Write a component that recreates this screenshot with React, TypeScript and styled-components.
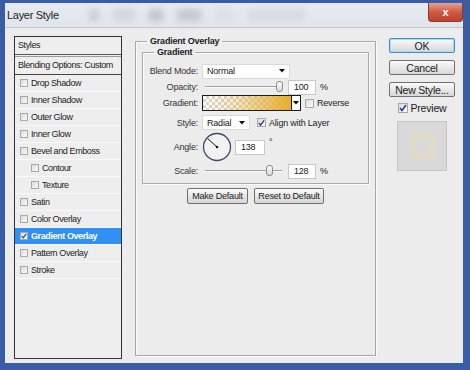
import styled, { createGlobalStyle } from 'styled-components'

const GlobalStyle = createGlobalStyle`
  html, body {
    margin: 0;
    padding: 0;
    background: #3a5ba6;
  }
  body {
    font-family: 'Liberation Sans', Arial, sans-serif;
  }
`

const Frame = styled.div`
  width: 470px;
  height: 370px;
  box-sizing: border-box;
  background: #3a5ba6;
  padding: 3px 7px 7px 5px;
`
const Window = styled.div`
  height: 100%;
  background: #ececec;
  display: flex;
  flex-direction: column;
`
const TitleBar = styled.div`
  height: 24px;
  display: flex;
  align-items: center;
  padding-left: 2px;
  background: linear-gradient(#e6eaf1, #e0e5ec);
  border-bottom: 1px solid #c2c6cd;
  overflow: hidden;
`
const Title = styled.span`
  font-size: 11px;
  letter-spacing: -0.3px;
  color: #222;
  margin-right: 30px;
`
type BlobProps = {
  w: number
  tone: string
}
const Blob = styled.span<BlobProps>`
  width: ${(p) => p.w}px;
  height: 12px;
  margin-right: 14px;
  background: ${(p) => p.tone};
  filter: blur(3px);
  opacity: 0.6;
`
const CloseButton = styled.div`
  margin-left: auto;
  align-self: flex-start;
  width: 35px;
  height: 19px;
  box-sizing: border-box;
  border: 1px solid #8a3a30;
  border-top: none;
  border-radius: 0 0 4px 4px;
  background: linear-gradient(#e7a393, #d05a45 50%, #c0402c);
  color: #fff;
  font-weight: bold;
  font-size: 11px;
  display: flex;
  align-items: center;
  justify-content: center;
`
const Body = styled.div`
  flex: 1;
  display: flex;
  padding: 8px 8px 4px 9px;
  min-height: 0;
`
const LeftPanel = styled.div`
  width: 108px;
  box-sizing: border-box;
  border: 1px solid #333;
  background: #eeeeee;
  font-size: 9px;
  letter-spacing: -0.4px;
  color: #222;
`
const HeaderRow = styled.div`
  height: 17px;
  line-height: 17px;
  padding-left: 3px;
  border-bottom: 1px solid #555;
`
const BlendRow = styled.div`
  height: 17px;
  line-height: 17px;
  padding-left: 3px;
  margin-top: 1px;
  border-top: 1px solid #9a9a9a;
  border-bottom: 1px solid #444;
`
type ItemProps = {
  indent: number
  selected: number
}
const Item = styled.div<ItemProps>`
  height: 16px;
  display: flex;
  align-items: center;
  padding-left: ${(p) => (p.indent ? 16 : 5)}px;
  border-bottom: 1px solid #f9f9f9;
  background: ${(p) => (p.selected ? '#2f8ff2' : 'transparent')};
  color: ${(p) => (p.selected ? '#fff' : '#222')};
  font-weight: ${(p) => (p.selected ? 'bold' : 'normal')};
`
type BoxProps = {
  size: number
}
const CheckBox = styled.span<BoxProps>`
  width: ${(p) => p.size}px;
  height: ${(p) => p.size}px;
  box-sizing: border-box;
  border: 1px solid #a8a8a8;
  background: linear-gradient(135deg, #dcdcdc, #fafafa);
  margin-right: 3px;
  display: inline-flex;
  align-items: center;
  justify-content: center;
  flex-shrink: 0;
`
const Fieldset = styled.fieldset`
  margin: 0;
  padding: 0;
  border: 1px solid #a9a9a9;
  box-shadow: inset 1px 1px 0 #fafafa, 1px 1px 0 #fafafa;
`
const OuterSet = styled(Fieldset)`
  margin-left: 13px;
  margin-bottom: 3px;
  width: 241px;
  box-sizing: border-box;
  padding: 0 6px;
`
const Legend = styled.legend`
  font-size: 9px;
  font-weight: bold;
  letter-spacing: -0.2px;
  line-height: 11px;
  color: #1a1a1a;
  padding: 0 3px;
`
const OuterLegend = styled(Legend)`
  margin-left: 5px;
`
const InnerLegend = styled(Legend)`
  margin-left: 11px;
`
const InnerSet = styled(Fieldset)`
  padding: 5px 0 4px;
`
type RowProps = {
  h: number
  top: number
}
const Row = styled.div<RowProps>`
  display: flex;
  align-items: center;
  height: ${(p) => p.h}px;
  margin-top: ${(p) => p.top}px;
  font-size: 9px;
  letter-spacing: -0.2px;
  color: #222;
`
const Label = styled.span`
  width: 55px;
  margin-right: 4px;
  text-align: right;
  color: #333;
`
type WidthProps = {
  w: number
}
const Select = styled.div<WidthProps>`
  width: ${(p) => p.w}px;
  height: 15px;
  box-sizing: border-box;
  background: #fff;
  border: 1px solid #dadada;
  display: flex;
  align-items: center;
  justify-content: space-between;
  padding: 0 4px 0 4px;
`
const Slider = styled.div`
  position: relative;
  width: 77px;
  height: 14px;
  margin-left: 3px;
  display: flex;
  align-items: center;
`
const Track = styled.div`
  width: 100%;
  height: 1px;
  background: #a0a0a0;
  border-bottom: 1px solid #fafafa;
`
const Thumb = styled.div`
  position: absolute;
  top: 1px;
  width: 7px;
  height: 11px;
  box-sizing: border-box;
  border: 1px solid #8c8c8c;
  border-radius: 3px;
  background: linear-gradient(#fdfdfd, #d8d8d8);
`
const NumInput = styled.div<WidthProps>`
  width: ${(p) => p.w}px;
  height: 15px;
  box-sizing: border-box;
  background: #fff;
  border: 1px solid #c8c8c8;
  padding-left: 5px;
  display: flex;
  align-items: center;
  margin-left: 6px;
`
const Unit = styled.span`
  margin-left: 4px;
`
const GradientBox = styled.div`
  width: 90px;
  height: 16px;
  box-sizing: border-box;
  border: 1px solid #1c1c1c;
  background: linear-gradient(to right, rgba(232, 170, 40, 0) 0%, rgba(232, 170, 40, 0.3) 40%, rgba(232, 172, 44, 1) 100%),
    repeating-conic-gradient(#d6d6d6 0 25%, #ffffff 0 50%) 0 0 / 6px 6px;
`
const GradientArrow = styled.div`
  width: 9px;
  height: 16px;
  box-sizing: border-box;
  border: 1px solid #1c1c1c;
  border-left: none;
  background: #fff;
  display: flex;
  align-items: center;
  justify-content: center;
`
const Spacer = styled.span<WidthProps>`
  width: ${(p) => p.w}px;
  flex-shrink: 0;
`
const ButtonRow = styled.div`
  display: flex;
  justify-content: center;
  gap: 6px;
  margin-top: 4px;
`
const Button = styled.div<WidthProps>`
  width: ${(p) => p.w}px;
  height: 16px;
  box-sizing: border-box;
  border: 1px solid #6f6f6f;
  border-radius: 2px;
  background: linear-gradient(#fbfbfb, #e6e6e6 50%, #d6d6d6);
  font-size: 9px;
  letter-spacing: -0.2px;
  color: #1a1a1a;
  display: flex;
  align-items: center;
  justify-content: center;
`
const RightColumn = styled.div`
  margin-left: 13px;
  width: 66px;
  display: flex;
  flex-direction: column;
  align-items: center;
  padding-top: 2px;
`
type BigButtonProps = {
  focus: number
}
const BigButton = styled.div<BigButtonProps>`
  width: 66px;
  height: 15px;
  box-sizing: border-box;
  margin-bottom: 7px;
  border: 1px solid ${(p) => (p.focus ? '#3d8fc6' : '#707070')};
  box-shadow: ${(p) => (p.focus ? 'inset 0 0 0 1px #a8dcf5' : 'none')};
  border-radius: 2px;
  background: linear-gradient(#fbfbfb, #e8e8e8 50%, #d8d8d8);
  font-size: 10.5px;
  letter-spacing: -0.2px;
  color: #1a1a1a;
  display: flex;
  align-items: center;
  justify-content: center;
`
const PreviewRow = styled.div`
  display: flex;
  align-items: center;
  font-size: 10.5px;
  letter-spacing: -0.2px;
  color: #1a1a1a;
  margin-top: -2px;
`
const Swatch = styled.div`
  width: 50px;
  height: 50px;
  box-sizing: border-box;
  margin-top: 7px;
  background: #d9d9d9;
  border: 1px solid #c4c4c4;
  display: flex;
  align-items: center;
  justify-content: center;
`
const SwatchSquare = styled.div`
  width: 18px;
  height: 18px;
  border: 2px solid #ecd9aa;
  box-shadow: 0 0 2px #eedfb6, inset 0 0 2px #eedfb6;
  opacity: 0.8;
`

const Check = () => (
  <svg width="8" height="8" viewBox="0 0 8 8">
    <path d="M1 4 L3 6.5 L7 1" stroke="#1d3fa6" strokeWidth="1.6" fill="none" />
  </svg>
)

const Caret = () => (
  <svg width="6" height="4" viewBox="0 0 6 4">
    <path d="M0 0 H6 L3 3.5 Z" fill="#111" />
  </svg>
)

const Dial = () => (
  <svg width="30" height="30" viewBox="0 0 30 30">
    <circle cx="15" cy="15" r="13.5" fill="#f2f2f2" stroke="#3c4a68" strokeWidth="1.3" />
    <line x1="15" y1="15" x2="5.7" y2="6.6" stroke="#111" strokeWidth="1" />
    <circle cx="15" cy="15" r="1.3" fill="#111" />
  </svg>
)

type StyleItem = {
  name: string
  indent?: boolean
  checked?: boolean
  selected?: boolean
}

const items: StyleItem[] = [
  { name: 'Drop Shadow' },
  { name: 'Inner Shadow' },
  { name: 'Outer Glow' },
  { name: 'Inner Glow' },
  { name: 'Bevel and Emboss' },
  { name: 'Contour', indent: true },
  { name: 'Texture', indent: true },
  { name: 'Satin' },
  { name: 'Color Overlay' },
  { name: 'Gradient Overlay', checked: true, selected: true },
  { name: 'Pattern Overlay' },
  { name: 'Stroke' },
]

const App = () => {
  return (
    <>
      <GlobalStyle />
      <Frame>
        <Window>
          <TitleBar>
            <Title>Layer Style</Title>
            <Blob w={10} tone="#b9bec7" />
            <Blob w={22} tone="#c7ccd4" />
            <Blob w={14} tone="#a9aeb7" />
            <Blob w={24} tone="#b0b5be" />
            <Blob w={20} tone="#d6dae0" />
            <Blob w={56} tone="#cfd3da" />
            <CloseButton>x</CloseButton>
          </TitleBar>
          <Body>
            <LeftPanel>
              <HeaderRow>Styles</HeaderRow>
              <BlendRow>Blending Options: Custom</BlendRow>
              {items.map((item) => (
                <Item key={item.name} indent={item.indent ? 1 : 0} selected={item.selected ? 1 : 0}>
                  <CheckBox size={8}>{item.checked ? <Check /> : null}</CheckBox>
                  {item.name}
                </Item>
              ))}
            </LeftPanel>

            <OuterSet>
              <OuterLegend>Gradient Overlay</OuterLegend>
              <InnerSet>
                <InnerLegend>Gradient</InnerLegend>
                <Row h={16} top={0}>
                  <Label>Blend Mode:</Label>
                  <Select w={88}>
                    Normal
                    <Caret />
                  </Select>
                </Row>
                <Row h={16} top={0}>
                  <Label>Opacity:</Label>
                  <Slider>
                    <Track />
                    <Thumb style={{ left: 71 }} />
                  </Slider>
                  <NumInput w={28}>100</NumInput>
                  <Unit>%</Unit>
                </Row>
                <Row h={16} top={0}>
                  <Label>Gradient:</Label>
                  <GradientBox />
                  <GradientArrow>
                    <Caret />
                  </GradientArrow>
                  <Spacer w={4} />
                  <CheckBox size={9} />
                  Reverse
                </Row>
                <Row h={17} top={3}>
                  <Label>Style:</Label>
                  <Select w={48}>
                    Radial
                    <Caret />
                  </Select>
                  <Spacer w={7} />
                  <CheckBox size={9}>
                    <Check />
                  </CheckBox>
                  Align with Layer
                </Row>
                <Row h={30} top={1}>
                  <Label>Angle:</Label>
                  <Dial />
                  <NumInput w={30} style={{ marginLeft: 3 }}>
                    138
                  </NumInput>
                  <Unit style={{ alignSelf: 'flex-start', marginTop: 5 }}>°</Unit>
                </Row>
                <Row h={16} top={1}>
                  <Label>Scale:</Label>
                  <Slider>
                    <Track />
                    <Thumb style={{ left: 61 }} />
                  </Slider>
                  <NumInput w={28}>128</NumInput>
                  <Unit>%</Unit>
                </Row>
              </InnerSet>
              <ButtonRow>
                <Button w={61}>Make Default</Button>
                <Button w={70}>Reset to Default</Button>
              </ButtonRow>
            </OuterSet>

            <RightColumn>
              <BigButton focus={1}>OK</BigButton>
              <BigButton focus={0}>Cancel</BigButton>
              <BigButton focus={0}>New Style...</BigButton>
              <PreviewRow>
                <CheckBox size={10}>
                  <Check />
                </CheckBox>
                Preview
              </PreviewRow>
              <Swatch>
                <SwatchSquare />
              </Swatch>
            </RightColumn>
          </Body>
        </Window>
      </Frame>
    </>
  )
}

export default App
